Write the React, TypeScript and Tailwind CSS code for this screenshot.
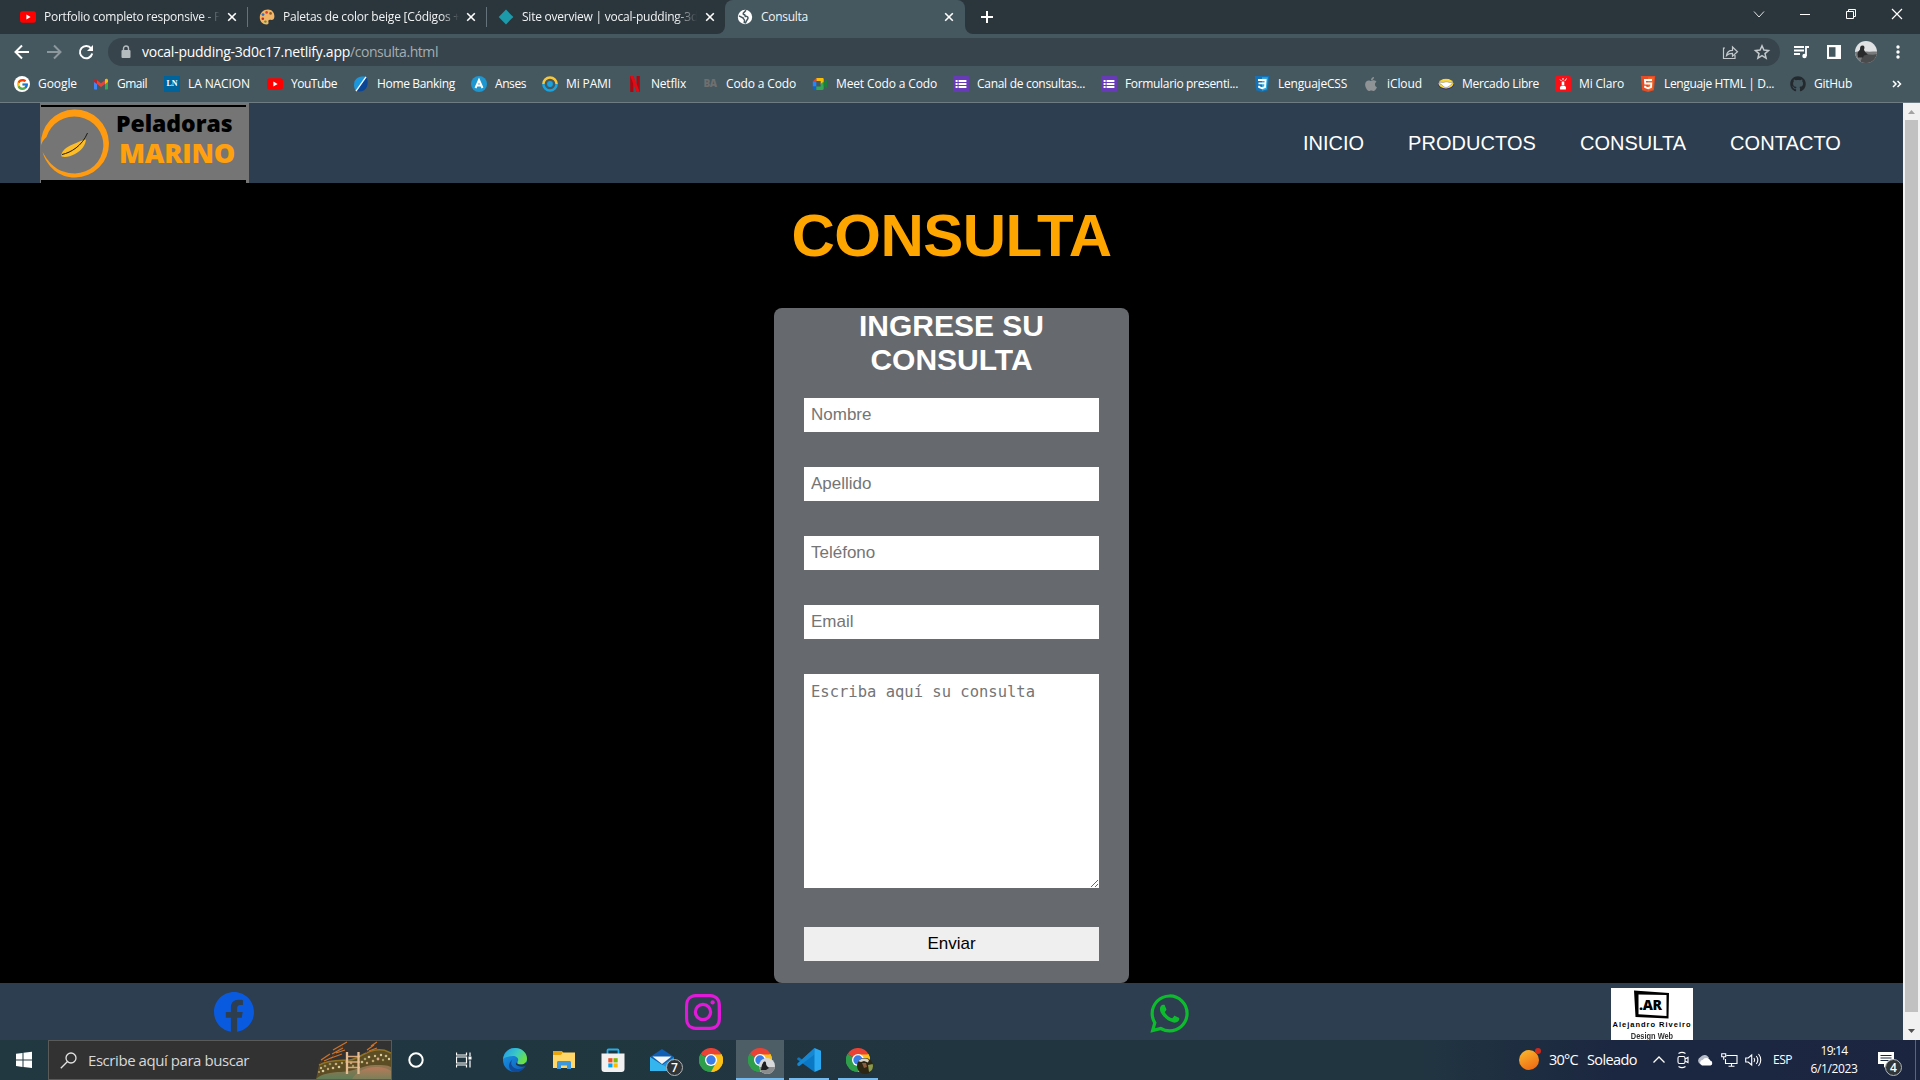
import { useLayoutEffect, useRef } from "react";
import type { ReactNode } from "react";
import { FcGoogle } from "react-icons/fc";
import { FaApple, FaGithub } from "react-icons/fa";
import { BiLogoFacebookCircle, BiLogoInstagram, BiLogoWhatsapp } from "react-icons/bi";

/* Single-line label whose letter spacing is tuned so that it fills `w` pixels. */
function Fit({ w, className = "", children }: { w: number; className?: string; children: string }) {
  const ref = useRef<HTMLSpanElement>(null);
  useLayoutEffect(() => {
    const el = ref.current;
    if (!el) return;
    el.style.letterSpacing = "0px";
    const natural = el.getBoundingClientRect().width;
    el.style.letterSpacing = `${(w - natural) / children.length}px`;
  }, [w, children]);
  return (
    <span ref={ref} className={`shrink-0 whitespace-pre ${className}`}>
      {children}
    </span>
  );
}

/* ---------- small icons ---------- */

const YouTube = () => (
  <svg width="16" height="16" viewBox="0 0 16 16">
    <rect x="0" y="2.3" width="16" height="11.4" rx="2.6" fill="#f00" />
    <path d="M6.4 5.6v4.8L10.6 8z" fill="#fff" />
  </svg>
);
const Palette = () => (
  <svg width="16" height="16" viewBox="0 0 16 16">
    <path d="M9 .6C4.5.6.8 4 .8 8.600c0 4 3 6.900 6.700 6.900 2 0 2.300-1.300 1.900-2.700-.4-1.500.6-2.300 2.100-2 2 .4 3.900-.3 3.900-3.300C15.400 3.400 12.800.6 9 .6z" fill="#f2b668" />
    <circle cx="4" cy="5.600" r="1.400" fill="#2e6fd0" />
    <circle cx="7.600" cy="3.400" r="1.300" fill="#e23b3b" />
    <circle cx="11.600" cy="4.400" r="1.300" fill="#8a5a2c" />
    <circle cx="3.800" cy="9.800" r="1.300" fill="#c02a20" />
    <circle cx="6.400" cy="12.600" r="1.200" fill="#3e9b46" />
  </svg>
);
const Diamond = () => (
  <svg width="16" height="16" viewBox="0 0 16 16">
    <path d="M8 .6 15.300 8 8 15.400.7 8z" fill="#1d9aaa" />
  </svg>
);
const Globe = () => (
  <svg width="16" height="16" viewBox="0 0 16 16">
    <circle cx="8" cy="8" r="7.200" fill="#fff" />
    <path d="M9 1.200 6.300 4.200c-.3 1.300.4 1.700 1.400 1.600l.6 1.600c1.500-.2 2.700.1 2.700 1.600 0 1.300-1 1.400-1.300 2.600L8.500 13.800l-1.200-.4.2-2.200c-.2-1-1.300-1-1.300-2.200L2 6.800" fill="none" stroke="#455860" strokeWidth="1.500" />
  </svg>
);
const Gmail = () => (
  <svg width="16" height="16" viewBox="0 0 16 16">
    <path d="M1 4v8.500c0 .6.4 1 1 1h2V7z" fill="#4285f4" />
    <path d="M15 4v8.500c0 .6-.4 1-1 1h-2V7z" fill="#34a853" />
    <path d="M4 4.200v3.900l4 3 4-3V4.200l-4 3z" fill="#ea4335" />
    <path d="M1 4.300C1 2.600 2.700 2.200 4 3.200v4.900L1 5.900z" fill="#c5221f" />
    <path d="M15 4.300c0-1.700-1.700-2.100-3-1.100v4.900l3-2.200z" fill="#fbbc04" />
  </svg>
);
const LaNacion = () => (
  <span className="flex h-4 w-4 items-center justify-center bg-[#00649c] font-['Liberation_Serif',serif] text-[8px] font-bold text-white">LN</span>
);
const HomeBanking = () => (
  <svg width="16" height="16" viewBox="0 0 16 16">
    <path d="M13 1C8.500-.5 3 1.500 1.500 5.500.8 9 .8 12.500 3 15z" fill="#1a97dc" />
    <path d="M13 1c2 2.500 2 6.500 1 9.500C12.500 14.500 8 16.500 3 15z" fill="#0b4595" />
    <path d="M13 .8 3 15.200" stroke="#fff" strokeWidth="1.300" />
  </svg>
);
const Anses = () => (
  <svg width="16" height="16" viewBox="0 0 16 16">
    <circle cx="8" cy="8" r="8" fill="#1e96cf" />
    <path d="M4.500 12 8 4l3.500 8M6 9.500h4" fill="none" stroke="#fff" strokeWidth="2" />
  </svg>
);
const Pami = () => (
  <svg width="16" height="16" viewBox="0 0 16 16">
    <path d="M1.400 8a6.600 6.600 0 0 1 13.200 0" fill="none" stroke="#f7c83d" strokeWidth="2.500" />
    <path d="M1.400 8a6.600 6.600 0 0 0 13.200 0" fill="none" stroke="#19a4df" strokeWidth="2.500" />
    <circle cx="8" cy="8" r="2.900" fill="#19a4df" />
  </svg>
);
const Netflix = () => (
  <svg width="16" height="16" viewBox="0 0 16 16">
    <path d="M3.200 0h3.200v16H3.200zM9.600 0h3.200v16H9.600z" fill="#b1060f" />
    <path d="M3.200 0h3.300l6.300 16H9.500z" fill="#e50914" />
  </svg>
);
const BuenosAires = () => (
  <span className="flex h-4 w-4 items-center justify-center font-['Open_Sans',sans-serif] text-[10px] font-extrabold tracking-tighter text-[#6f6f6e]">BA</span>
);
const Meet = () => (
  <svg width="16" height="16" viewBox="0 0 16 16">
    <path d="M4.300 2h6.200c.7 0 1.200.5 1.200 1.200v3L8.700 8.500V5H4.300z" fill="#fbbc04" />
    <path d="M4.300 2v3.600H.8z" fill="#ea4335" />
    <path d="M.8 5.400h3.500v5.200H.8z" fill="#2684fc" />
    <path d="M.8 10.500h3.500V14H1.900c-.6 0-1.100-.5-1.100-1.100z" fill="#0066da" />
    <path d="M4.300 14v-3.500h4.400V8l3-2.500v7.300c0 .7-.5 1.200-1.200 1.200z" fill="#34a853" />
    <path d="m11.700 6.300 2.500-2.200c.4-.4 1-.1 1 .4v7c0 .6-.6.800-1 .4l-2.500-2.100z" fill="#188038" />
  </svg>
);
const Forms = () => (
  <svg width="16" height="16" viewBox="0 0 16 16">
    <rect width="16" height="16" rx="1" fill="#673ab7" />
    <path d="M2.600 4h2v2h-2zM5.600 4h7.800v2H5.600zM2.600 7h2v2h-2zM5.600 7h7.800v2H5.600zM2.600 10h2v2h-2zM5.600 10h7.800v2H5.600z" fill="#fff" />
  </svg>
);
const Css3 = () => (
  <svg width="16" height="16" viewBox="0 0 16 16">
    <path d="M.8 0h14.400l-1.300 14.200L8 16l-5.900-1.800z" fill="#1572b6" />
    <path d="M8 1.200h5.900l-1.100 12.100L8 14.800z" fill="#33a9dc" />
    <path d="M4 4h7.600l-.6 7.200-3 1-2.900-1-.1-1.400M4.500 7.400h6.700" fill="none" stroke="#fff" strokeWidth="1.800" />
  </svg>
);
const Html5 = () => (
  <svg width="16" height="16" viewBox="0 0 16 16">
    <path d="M.8 0h14.400l-1.300 14.200L8 16l-5.900-1.800z" fill="#e44d26" />
    <path d="M8 1.200h5.900l-1.100 12.100L8 14.800z" fill="#f16529" />
    <path d="M12 4H4.900l.3 3.500h6.100l-.3 3.700-3 1-2.900-1-.1-1.400" fill="none" stroke="#fff" strokeWidth="1.800" />
  </svg>
);
const MercadoLibre = () => (
  <svg width="16" height="16" viewBox="0 0 16 16">
    <ellipse cx="8" cy="8" rx="8" ry="5.400" fill="#2d3277" />
    <ellipse cx="8" cy="7.600" rx="7.500" ry="4.800" fill="#fcd733" />
    <path d="M1.600 6.200c2-.2 3.200.6 4.800 0 1.300-.5 2.800-.6 4 0 1.400.6 2.700.2 4 0l-.5 2c-2 .3-2 2.400-4.200 2.900-1.400.5-3.300.4-4.300-.7C4.600 9.400 3.500 8.200 2 8z" fill="#fff" stroke="#6b7297" strokeWidth=".5" />
  </svg>
);
const Claro = () => (
  <svg width="16" height="16" viewBox="0 0 16 16">
    <rect width="16" height="16" rx="2" fill="#fb0f17" />
    <path d="M5.200 13.600c-1-3 .8-4 2.800-4s3.800 1 2.800 4zM6.700 9V5.500h2.600V9z" fill="#fff" />
    <path d="M5 3.500 6.500 5M8 2v2.200M11.500 2.500 9.800 5" stroke="#fff" strokeWidth="1" />
  </svg>
);
const Close = () => (
  <svg width="10" height="10" viewBox="0 0 10 10" className="shrink-0" stroke="#fff" strokeWidth="1.600">
    <path d="m1.200 1.200 7.600 7.600M8.800 1.200 1.200 8.800" />
  </svg>
);

/* ---------- browser chrome ---------- */

function Tab({ icon, title, w }: { icon: ReactNode; title: string; w: number }) {
  return (
    <div className="flex h-[34px] w-[239px] shrink-0 items-center">
      <div className="ml-[11px] h-4 w-4 shrink-0">{icon}</div>
      <div className="ml-2 w-[176px] shrink-0 overflow-hidden [mask-image:linear-gradient(90deg,#000_90%,transparent)]">
        <Fit w={w}>{title}</Fit>
      </div>
      <div className="ml-[7px] flex">
        <Close />
      </div>
      <div className="ml-auto h-5 w-px bg-[#65727a]" />
    </div>
  );
}

function TabStrip() {
  return (
    <div className="flex h-[34px] bg-[#2b363c] pl-[9px] text-xs text-[#f1f3f4]">
      <Tab icon={<YouTube />} title="Portfolio completo responsive - P" w={177} />
      <Tab icon={<Palette />} title="Paletas de color beige [Códigos +" w={177} />
      <div className="flex h-[34px] w-[230px] shrink-0 items-center">
        <div className="ml-[11px] h-4 w-4 shrink-0"><Diamond /></div>
        <div className="ml-2 w-[175px] shrink-0 overflow-hidden [mask-image:linear-gradient(90deg,#000_88%,transparent)]">
          <Fit w={176}>Site overview | vocal-pudding-3d</Fit>
        </div>
        <div className="ml-2 flex"><Close /></div>
      </div>
      <div className="flex h-[34px] w-2 items-end bg-[#455860]"><div className="h-full w-2 rounded-br-lg bg-[#2b363c]" /></div>
      <div className="flex h-[34px] w-[240px] shrink-0 items-center rounded-t-lg bg-[#455860] pl-3">
        <Globe />
        <Fit w={47} className="ml-2">Consulta</Fit>
        <div className="ml-auto mr-[11px] flex"><Close /></div>
      </div>
      <div className="h-[34px] w-2 bg-[#455860]"><div className="h-full w-2 rounded-bl-lg bg-[#2b363c]" /></div>
      <svg width="14" height="34" viewBox="0 0 14 34" className="ml-[7px]" stroke="#fff" strokeWidth="2">
        <path d="M1 17h12M7 11v12" />
      </svg>
      <div className="ml-auto flex h-7 items-center">
        <svg width="46" height="28" viewBox="0 0 46 28" fill="none" stroke="#dfe3e5"><path d="m18 11.500 5 5.500 5-5.500" /></svg>
        <svg width="46" height="28" viewBox="0 0 46 28" fill="none" stroke="#fff"><path d="M18 14.500h10" /></svg>
        <svg width="46" height="28" viewBox="0 0 46 28" fill="none" stroke="#fff"><path d="M18.500 11.500h7v7h-7zM20.500 11.500v-2h7v7h-2" /></svg>
        <svg width="46" height="28" viewBox="0 0 46 28" fill="none" stroke="#fff" strokeWidth="1.200"><path d="m18 9 10 10M28 9 18 19" /></svg>
      </div>
    </div>
  );
}

function Toolbar() {
  return (
    <div className="flex h-9 items-center bg-[#455860] pl-1.5">
      <svg width="32" height="36" viewBox="0 0 32 36" fill="none" stroke="#fff" strokeWidth="2"><path d="M23 18H10M16 11.500 9.500 18l6.500 6.500" /></svg>
      <svg width="32" height="36" viewBox="0 0 32 36" fill="none" stroke="#8d989d" strokeWidth="2"><path d="M9 18h13M16 11.500l6.500 6.500-6.500 6.500" /></svg>
      <svg width="32" height="36" viewBox="0 0 32 36" fill="none" stroke="#fff" strokeWidth="2"><path d="M21.200 14.500a6.200 6.200 0 1 0 1 5" /><path d="M23 11v6h-6z" fill="#fff" stroke="none" /></svg>
      <div className="ml-1.5 flex h-7 w-[1672px] items-center rounded-full bg-[#37444b] text-sm">
        <svg width="10" height="14" viewBox="0 0 10 14" className="ml-[13px]"><rect x=".5" y="5" width="9" height="8" rx="1" fill="#b5bcc0" /><path d="M2.500 5V3.500a2.500 2.500 0 0 1 5 0V5" fill="none" stroke="#b5bcc0" strokeWidth="1.400" /></svg>
        <Fit w={208} className="ml-[11px] text-white">vocal-pudding-3d0c17.netlify.app</Fit>
        <Fit w={88} className="text-[#a5aeb2]">/consulta.html</Fit>
        <div className="ml-auto flex items-center">
          <svg width="32" height="28" viewBox="0 0 32 28" fill="none" stroke="#c3c9cc" strokeWidth="1.200"><path d="M11 10H9.500v10.500H21V17M12.500 17.500c.4-3.500 2.500-5.200 6-5.200V9l5 4.700-5 4.500v-2.900c-2.800 0-4.500.5-6 2.200z" /></svg>
          <svg width="32" height="28" viewBox="0 0 32 28" className="mr-0.5" fill="none" stroke="#c3c9cc" strokeWidth="1.500"><path d="m16 7.800 1.900 4.300 4.600.4-3.500 3.100 1.100 4.600-4.100-2.500-4.100 2.500 1.100-4.600-3.500-3.100 4.600-.4z" /></svg>
        </div>
      </div>
      <svg width="32" height="36" viewBox="0 0 32 36" className="ml-[5px]" fill="none" stroke="#fff" strokeWidth="1.800"><path d="M9 13h10M9 16.500h10M9 20h6" /><path d="M21 22v-9h3" /><circle cx="19.500" cy="22" r="2.200" fill="#fff" stroke="none" /></svg>
      <svg width="33" height="36" viewBox="0 0 33 36"><path d="M10 11h14v14H10z" fill="#fff" /><path d="M12 13.200h6.500v9.600H12z" fill="#455860" /></svg>
      <svg width="32" height="36" viewBox="0 0 32 36">
        <defs><clipPath id="avatar"><circle cx="16" cy="18" r="11" /></clipPath></defs>
        <g clipPath="url(#avatar)">
          <path d="M5 7h22v22H5z" fill="#dfe1e3" /><path d="M5 18c5-1 9 0 22-.5v12H5z" fill="#77797b" />
          <path d="M13 21c5-2 8 1 14-1v9H10z" fill="#4a4b4d" />
          <path d="M7.500 20c.5-3 1.500-3 2.500-4.500 0-2.500.5-4 2.500-4s2.500 1.800 1.500 4c.5 2 2 3.500 4 5l-4 1-1 2H8z" fill="#2a2b2d" />
        </g>
      </svg>
      <svg width="32" height="36" viewBox="0 0 32 36" fill="#fff"><circle cx="16" cy="13" r="1.700" /><circle cx="16" cy="18" r="1.700" /><circle cx="16" cy="23" r="1.700" /></svg>
    </div>
  );
}

const bookmarks: { icon: ReactNode; label: string; text: number; cell: string }[] = [
  { icon: <span className="flex h-4 w-4 items-center justify-center rounded-full bg-white"><FcGoogle size={13} /></span>, label: "Google", text: 39, cell: "w-[79px]" },
  { icon: <Gmail />, label: "Gmail", text: 30, cell: "w-[71px]" },
  { icon: <LaNacion />, label: "LA NACION", text: 62, cell: "w-[103px]" },
  { icon: <YouTube />, label: "YouTube", text: 46, cell: "w-[86px]" },
  { icon: <HomeBanking />, label: "Home Banking", text: 78, cell: "w-[118px]" },
  { icon: <Anses />, label: "Anses", text: 31, cell: "w-[71px]" },
  { icon: <Pami />, label: "Mi PAMI", text: 45, cell: "w-[85px]" },
  { icon: <Netflix />, label: "Netflix", text: 35, cell: "w-[75px]" },
  { icon: <BuenosAires />, label: "Codo a Codo", text: 70, cell: "w-[110px]" },
  { icon: <Meet />, label: "Meet Codo a Codo", text: 101, cell: "w-[141px]" },
  { icon: <Forms />, label: "Canal de consultas...", text: 108, cell: "w-[148px]" },
  { icon: <Forms />, label: "Formulario presenti...", text: 113, cell: "w-[153px]" },
  { icon: <Css3 />, label: "LenguajeCSS", text: 69, cell: "w-[109px]" },
  { icon: <FaApple size={16} color="#8f9395" />, label: "iCloud", text: 35, cell: "w-[75px]" },
  { icon: <MercadoLibre />, label: "Mercado Libre", text: 77, cell: "w-[117px]" },
  { icon: <Claro />, label: "Mi Claro", text: 45, cell: "w-[85px]" },
  { icon: <Html5 />, label: "Lenguaje HTML | D...", text: 110, cell: "w-[150px]" },
  { icon: <FaGithub size={16} color="#24292e" />, label: "GitHub", text: 38, cell: "w-[102px]" },
];

function Bookmarks() {
  return (
    <div className="flex h-[33px] items-center border-b border-[#6d7b82] bg-[#455860] pb-[5px] pl-3.5 pt-px text-xs text-white">
      {bookmarks.map((b) => (
        <div key={b.label} className={`flex shrink-0 items-center gap-2 ${b.cell}`}>
          <span className="h-4 w-4 shrink-0">{b.icon}</span>
          <Fit w={b.text}>{b.label}</Fit>
        </div>
      ))}
      <svg width="10" height="8" viewBox="0 0 10 8" fill="none" stroke="#fff" strokeWidth="1.500"><path d="m1 1 3 3-3 3M5.500 1l3 3-3 3" /></svg>
    </div>
  );
}

/* ---------- web page ---------- */

function BrandLogo() {
  return (
    <div className="ml-10 flex h-20 w-[209px] flex-col bg-[#757575]">
      <div className="ml-px mt-[1.500px] h-[2.500px] w-[205px] shrink-0 bg-black" />
      <div className="flex h-[72px] shrink-0 items-start">
        <svg width="72" height="74" viewBox="0 0 72 74">
          <path d="M1 38A34 34 0 1 1 35 70.500C19 70.500 7 60 2.500 45c7 12 15 21 32.500 21.500A29 28.500 0 1 0 6.500 30C3.500 33 2 35 1 38z" fill="#ff9b10" />
          <path d="M21.500 49.500c-1-5 5-9.500 11-12 5-2 9-4.500 13.500-5C45.500 38 42 43.500 35 47c-5 2.600-9.500 3.500-13.500 2.500z" fill="#fcbd28" />
          <path d="M22 47.500c9-2 20-8.500 25.500-21.500" fill="none" stroke="#1c1a10" strokeWidth="1" />
        </svg>
        <div className="flex flex-col font-['Open_Sans',sans-serif] font-extrabold">
          <Fit w={120} className="ml-1 mt-[3px] text-[23px] leading-[27px] text-black">Peladoras</Fit>
          <Fit w={116} className="ml-[7px] mt-px text-[27px] leading-[30px] text-[#ffa00f]">MARINO</Fit>
        </div>
      </div>
      <div className="ml-px mt-px h-[2.500px] w-[205px] shrink-0 bg-black" />
    </div>
  );
}

function ArLogo() {
  return (
    <div className="flex h-[52px] w-[82px] flex-col items-center bg-white">
      <svg width="36" height="29" viewBox="0 0 36 29" className="mt-[1.500px] shrink-0">
        <path fillRule="evenodd" d="M0 .5 35 3l-.5 25.500L1.500 27zM4.500 4.500v19.800L32.500 26V5z" fill="#000" />
        <text x="5" y="20" fontFamily="Open Sans, sans-serif" fontWeight="800" fontSize="14" textLength="23">.AR</text>
      </svg>
      <Fit w={79} className="mt-px font-['Liberation_Sans',sans-serif] text-[7.5px] font-bold leading-[9px] text-black">Alejandro Riveiro</Fit>
      <span className="mt-0.5 flex w-[38px] origin-center scale-x-[0.78] justify-center whitespace-pre font-['Liberation_Sans',sans-serif] text-[9.500px] font-bold leading-[9px] text-[#333]">Design Web</span>
    </div>
  );
}

function WebPage() {
  return (
    <div className="flex h-[937px]">
      <div className="flex w-[1903px] flex-col bg-black font-['Liberation_Sans',Arial,sans-serif]">
        <header className="flex h-20 items-start justify-between bg-[#2c3e50]">
          <BrandLogo />
          <nav className="mr-[62px] flex h-[79px] items-center gap-11 text-[20px] text-white">
            <Fit w={61}>INICIO</Fit>
            <Fit w={128}>PRODUCTOS</Fit>
            <Fit w={106}>CONSULTA</Fit>
            <Fit w={111}>CONTACTO</Fit>
          </nav>
        </header>
        <main className="flex h-[800px] flex-col items-center">
          <h1 className="mt-[18px] h-[107px] text-[60px] font-bold leading-[69px] text-[orange]">
            <Fit w={320}>CONSULTA</Fit>
          </h1>
          <form className="flex h-[675px] w-[355px] flex-col items-center rounded-lg bg-[#66696e]">
            <h2 className="mt-px w-[200px] text-center text-[30px] font-bold leading-[34px] text-white">INGRESE SU CONSULTA</h2>
            <div className="mt-[21px] flex w-[295px] flex-col gap-[35px] text-[17px]">
              {["Nombre", "Apellido", "Teléfono", "Email"].map((p) => (
                <input key={p} placeholder={p} className="h-[34px] w-full bg-white px-[7px] placeholder:text-[#757575]" />
              ))}
            </div>
            <textarea
              placeholder="Escriba aquí su consulta"
              className="mt-[35px] h-[214px] w-[295px] shrink-0 resize bg-white px-[7px] py-2 font-['DejaVu_Sans_Mono',monospace] text-[15.5px] leading-5 placeholder:text-[#757575]"
            />
            <button type="button" className="mt-[39px] h-[34px] w-[295px] shrink-0 bg-[#efefef] text-[17px] text-black">Enviar</button>
          </form>
        </main>
        <footer className="flex h-[57px] items-end bg-[#2c3e50]">
          <BiLogoFacebookCircle size={48} color="#0a5ae0" className="mb-1 ml-[210px]" />
          <BiLogoInstagram size={48} color="#e01ad8" className="mb-1 ml-[421px]" />
          <BiLogoWhatsapp size={51} color="#0cbc2c" className="mb-[1px] ml-[417px]" />
          <div className="ml-[416px]"><ArLogo /></div>
        </footer>
      </div>
      <div className="flex w-[17px] flex-col items-center bg-[#f1f1f1]">
        <svg width="17" height="17" viewBox="0 0 17 17"><path d="M5 11h7L8.500 7z" fill="#a3a3a3" /></svg>
        <div className="h-[892px] w-[13px] bg-[#c1c1c1]" />
        <svg width="17" height="17" viewBox="0 0 17 17" className="mt-auto"><path d="M5 6h7l-3.500 4z" fill="#505050" /></svg>
      </div>
    </div>
  );
}

/* ---------- taskbar ---------- */

const Chrome = () => (
  <svg width="24" height="24" viewBox="0 0 24 24">
    <path d="M12 12 1.600 6A12 12 0 0 1 22.400 6z" fill="#ea4335" />
    <path d="M12 12 22.400 6A12 12 0 0 1 12 24z" fill="#fbc116" />
    <path d="M12 12 12 24A12 12 0 0 1 1.600 6z" fill="#34a04c" />
    <path d="M12 6.500h10.650A12 12 0 0 1 12 24l4.800-9z" fill="#fbc116" />
    <path d="M1.600 6 7.200 15l4.800 2.500 4.500-2L12 24A12 12 0 0 1 1.600 6z" fill="#2f9e4b" />
    <circle cx="12" cy="12" r="6" fill="#fff" />
    <circle cx="12" cy="12" r="4.700" fill="#3b7de8" />
  </svg>
);
const Edge = () => (
  <svg width="24" height="24" viewBox="0 0 24 24">
    <defs>
      <linearGradient id="edgeTop" x1="0" y1="0" x2="1" y2=".5"><stop offset=".1" stopColor="#249ee8" /><stop offset=".6" stopColor="#3bcbc0" /><stop offset="1" stopColor="#6be045" /></linearGradient>
      <linearGradient id="edgeLow" x1="0" y1="0" x2="1" y2="1"><stop stopColor="#1a9be6" /><stop offset="1" stopColor="#0d58b8" /></linearGradient>
    </defs>
    <circle cx="12" cy="12" r="12" fill="url(#edgeLow)" />
    <path d="M0 11C1 4.500 6 0 12 0c7 0 12 5 12 10.500 0 4-3 6-6.500 6-3 0-4-1-3-2.500 2-3-.5-6-4.500-6C6 8 2 9 0 11z" fill="url(#edgeTop)" />
    <path d="M9.500 11.500C6 16 10 21 16 21c2.500 0 4.500-1 6.500-3-2 4-6 6-10.500 6-6 0-8.500-8-2.500-12.500z" fill="#104a98" />
    <path d="M14.500 14c-.8 1.300-.3 2.500 3 2.500 2.500 0 4.500-.8 5.700-2.600L24 16l-1.700 2.300C18 19.500 14 18 13 16.500c-.3-1 .5-2 1.500-2.500z" fill="#213740" />
  </svg>
);
const Explorer = () => (
  <svg width="24" height="24" viewBox="0 0 24 24">
    <path d="M1 3h9l1.500 2H1z" fill="#e39b00" /><path d="M1 4.500h22V20H1z" fill="#ffd769" /><path d="M1 3h9v3L8.500 7H1z" fill="#e8a40c" />
    <path d="M5 21v-6.500c0-1 .6-1.500 1.500-1.500h11c.9 0 1.500.5 1.500 1.500V21h-4v-3.500H9V21z" fill="#3d97dd" />
  </svg>
);
const Store = () => (
  <svg width="24" height="24" viewBox="0 0 24 24">
    <path d="M6.500 7V2.500c0-.6.400-1 1-1h9c.6 0 1 .4 1 1V7" fill="none" stroke="#27aee9" strokeWidth="1.800" />
    <path d="M.5 5.500h23V21a3 3 0 0 1-3 3h-17a3 3 0 0 1-3-3z" fill="#f1f1f1" />
    <path d="M7.300 10.200h4.200v4.200H7.300z" fill="#f25022" /><path d="M12.500 10.200h4.200v4.200h-4.200z" fill="#7fba00" /><path d="M7.300 15.400h4.200v4H7.300z" fill="#00a4ef" /><path d="M12.500 15.400h4.200v4h-4.200z" fill="#ffb900" />
  </svg>
);
const Mail = () => (
  <svg width="24" height="24" viewBox="0 0 24 24">
    <path d="M0 9 12 1l12 8-12 8z" fill="#0f5fb4" /><path d="M2.500 8.500h19L12 16z" fill="#f5f5f5" /><path d="M0 9v14h24V9l-12 8z" fill="#1e95e0" /><path d="M0 23h24L10 15.500 0 9z" fill="#34b5ee" />
  </svg>
);
const VsCode = () => (
  <svg width="24" height="24" viewBox="0 0 24 24">
    <path d="M17.500 0 5 11.500 2 9.200.3 10l-.1 1.500L17.500 24l1-6V6z" fill="#0a78c4" />
    <path d="M17.500 6.500 2 18.200l-1.700-1v-1.700L17.500 0z" fill="#1687d2" />
    <path d="M17.500 0 24 2.800v18.400L17.500 24z" fill="#2aa9f2" />
  </svg>
);

function Badge({ children }: { children: string }) {
  return (
    <span className="flex h-[17px] w-[17px] items-center justify-center rounded-full border border-[#b0b5b8] bg-[#2f3538] text-xs font-semibold leading-none text-white">
      {children}
    </span>
  );
}

function Profile({ dark }: { dark?: boolean }) {
  return (
    <svg width="16" height="16" viewBox="0 0 16 16">
      <defs><clipPath id={dark ? "profileDark" : "profileLight"}><circle cx="8" cy="8" r="8" /></clipPath></defs>
      {dark ? (
        <g clipPath="url(#profileDark)">
          <path d="M0 0h16v16H0z" fill="#2c2613" />
          <path d="M1 3c3-3 8-3 11-1l-1 2.500-4-1.500-3 1z" fill="#d8d3c4" />
          <path d="M5 5h4l1 4-3 1z" fill="#8a5b3c" /><path d="M11 7l5-1v6l-4 2z" fill="#8a9a4c" />
        </g>
      ) : (
        <g clipPath="url(#profileLight)">
          <path d="M0 0h16v16H0z" fill="#d7d9da" /><path d="M0 9h16v7H0z" fill="#8a8c8e" />
          <path d="M2 12c.5-3 .5-5 2-7 .5-2 3-2 3 0 0 2 1 3.500 3 5l-3 2z" fill="#1e1f20" />
        </g>
      )}
    </svg>
  );
}

function Slot({ children, overlay, active, running }: { children: ReactNode; overlay?: ReactNode; active?: boolean; running?: boolean }) {
  return (
    <div className={`relative flex h-10 w-12 shrink-0 items-center justify-center ${active ? "bg-[#4d5e66]" : ""}`}>
      {children}
      {overlay && <div className="absolute left-[23px] top-[18px]">{overlay}</div>}
      {active && <div className="absolute inset-x-0 bottom-0 h-0.5 bg-[#76b9ed]" />}
      {running && <div className="absolute inset-x-1 bottom-0 h-0.5 bg-[#76b9ed]" />}
    </div>
  );
}

const stones: [number, number, number, string][] = [
  [5, 27, 1.2, "#c9b983"], [9, 25, 1.3, "#a89a5f"], [7, 30, 1.3, "#d8cda0"], [12, 28, 1.2, "#c2a873"], [14, 23, 1.3, "#98925c"],
  [17, 27, 1.3, "#d5c08e"], [3, 31, 1.1, "#b09a68"], [20, 23, 1.3, "#c8ad76"], [23, 26, 1.3, "#d8cda0"], [26, 22, 1.2, "#b9a569"],
  [35, 22, 1.3, "#b9a569"], [37, 25, 1.2, "#a89a5f"], [46, 21, 1.3, "#c6bc86"], [49, 18, 1.3, "#a9a368"], [51, 22, 1.2, "#c7a172"],
  [53, 16, 1.3, "#d8c79a"], [57, 20, 1.3, "#b9a569"], [59, 15, 1.2, "#cfc191"], [62, 18, 1.4, "#d7a98c"], [65, 14, 1.2, "#ddd0a2"],
  [67, 19, 1.2, "#a09a61"], [70, 15, 1.3, "#c6bc86"], [73, 18, 1.2, "#d8cda0"],
];

const SearchArt = () => (
  <svg width="75" height="38" viewBox="0 0 75 38">
    <defs>
      <linearGradient id="meadow" x1="0" y1="0" x2="0" y2="1"><stop stopColor="#9a7350" /><stop offset="1" stopColor="#5f7d55" /></linearGradient>
      <linearGradient id="hill" x1="0" y1="0" x2="0" y2="1"><stop stopColor="#b87a5a" /><stop offset="1" stopColor="#7a8058" /></linearGradient>
    </defs>
    <path d="M0 38 3 24C15 18 26 20 34 19S50 10 60 9s12 2 15 3v26z" fill="#5d4d24" />
    <path d="M3 24C15 18 26 20 34 19S50 10 60 9s12 2 15 3" fill="none" stroke="#8f7428" strokeWidth="1.500" />
    {stones.map(([x, y, r, c]) => <circle key={`${x}-${y}`} cx={x} cy={y} r={r} fill={c} />)}
    <path d="M0 38c5-5 15-7 25-7 16-1 22-7 34-7 7 0 12 0 16 2v12z" fill="url(#meadow)" />
    <path d="M36 38c5-8 14-12 24-12 7 0 12 2 15 4v8z" fill="url(#hill)" />
    <path d="M4 23c2-4 4-7 8-9M14 20c3-6 7-11 13-15M50 12c3-5 6-7 9-9" fill="none" stroke="#6b3a1c" strokeWidth=".9" />
    <path d="m5 19 9-6M8 20l9-4M16 13l11-6M17 9l14-8M15 17l11-4M20 12l9-3M51 9l7-5M53 10l8-3M55 5l6-4" fill="none" stroke="#c9722c" strokeWidth="1.300" />
    <path d="M30 15.500h14M29.500 21h14.500M30 26.500h14" fill="none" stroke="#d6a77a" strokeWidth="1.300" />
    <path d="M31 11v22M42.500 11v22" fill="none" stroke="#e6bd92" strokeWidth="2.300" />
  </svg>
);

function Taskbar() {
  return (
    <div className="flex h-10 items-center bg-[linear-gradient(90deg,#213841_0%,#20353f_50%,#213541_74%,#1b2740_84%,#1b2540_100%)] text-white">
      <svg width="48" height="40" viewBox="0 0 48 40" className="shrink-0" fill="#fff"><path d="M16 13.800 22.500 13V19.500H16zM23.500 12.800 32 11.800v7.700h-8.500zM16 20.500h6.500v6.400L16 26.100zM23.500 20.500H32V28l-8.500-1z" /></svg>
      <div className="flex h-10 w-[344px] shrink-0 items-center border border-[#5a5a58] bg-[#323232]">
        <svg width="17" height="17" viewBox="0 0 17 17" className="ml-[11px]" fill="none" stroke="#e2e2e2" strokeWidth="1.300"><circle cx="11" cy="6" r="5" /><path d="M7.500 9.500.8 16.200" /></svg>
        <Fit w={161} className="ml-[11px] text-[15px] text-[#d8d8d8]">Escribe aquí para buscar</Fit>
        <div className="ml-auto"><SearchArt /></div>
      </div>
      <Slot><svg width="16" height="16" viewBox="0 0 16 16"><circle cx="8" cy="8" r="6.700" fill="none" stroke="#fff" strokeWidth="2" /></svg></Slot>
      <div className="mr-[3px]">
        <Slot><svg width="16" height="16" viewBox="0 0 16 16" fill="none" stroke="#fff"><path d="M.5.500v2.500h10V.500M.500 15.500V13h10v2.500M.500 5h10v6H.500zM14 .500V4M14 8.500v7" strokeWidth="1.200" /><path d="M12.500 4.500h3v3h-3z" fill="#fff" stroke="none" /></svg></Slot>
      </div>
      <div className="flex gap-px">
        <Slot><Edge /></Slot>
        <Slot><Explorer /></Slot>
        <Slot><Store /></Slot>
        <Slot overlay={<div className="ml-[5px] mt-px"><Badge>7</Badge></div>}><Mail /></Slot>
        <Slot><Chrome /></Slot>
        <Slot active overlay={<Profile />}><Chrome /></Slot>
        <Slot running><VsCode /></Slot>
        <Slot running overlay={<Profile dark />}><Chrome /></Slot>
      </div>
      <div className="ml-auto flex items-center">
        <svg width="24" height="24" viewBox="0 0 24 24">
          <defs><linearGradient id="sun" x1=".2" y1="0" x2=".7" y2="1"><stop stopColor="#f8b62c" /><stop offset="1" stopColor="#f06a14" /></linearGradient></defs>
          <circle cx="10" cy="12" r="10" fill="url(#sun)" /><circle cx="19" cy="3" r="3" fill="#cc2a1d" />
        </svg>
        <Fit w={29} className="ml-1.5 text-[14.500px]">30°C</Fit>
        <Fit w={50} className="ml-[9px] text-[14.500px]">Soleado</Fit>
        <svg width="14" height="16" viewBox="0 0 14 16" className="ml-[15px]" fill="none" stroke="#fff" strokeWidth="1.300"><path d="m1.500 10.500 5.500-5.500 5.500 5.500" /></svg>
        <svg width="14" height="18" viewBox="0 0 14 18" className="ml-2.5" fill="none" stroke="#fff" strokeWidth="1.100"><rect x="2" y="5.500" width="7" height="7" rx="1.500" /><path d="m9 8 3-1.500v5L9 10M2.500 2.500c2-1.300 5-1.300 7 0M2.500 15.500c2 1.300 5 1.300 7 0" /></svg>
        <svg width="17" height="16" viewBox="0 0 17 16" className="ml-[7px]"><path d="M4 12.500a4 4 0 0 1-.5-7.500 5 5 0 0 1 8.500 1z" fill="#b6bcc8" /><path d="M5 13.500a3 3 0 0 1 1-5.800 4.200 4.200 0 0 1 7.200.8 2.600 2.600 0 0 1 .3 5z" fill="#fff" /></svg>
        <svg width="17" height="16" viewBox="0 0 17 16" className="ml-[7px]" fill="none" stroke="#fff" strokeWidth="1.100"><path d="M5.500 3.500H16v8H4.500V7M10.500 11.500V14M7.500 14.300h6M.7 1.700h4v3h-4zM2.700 4.700v3" /></svg>
        <svg width="17" height="16" viewBox="0 0 17 16" className="ml-[7px]" fill="none" stroke="#fff" strokeWidth="1.100"><path d="M.7 6v4h2.500l3.500 3V3L3.200 6zM9 6c.8 1.200.8 2.800 0 4M11.300 4c1.800 2.300 1.800 5.700 0 8M13.500 2c3 3.500 3 8.500 0 12" /></svg>
        <Fit w={19} className="ml-[11px] text-xs">ESP</Fit>
        <div className="ml-[18px] flex w-[48px] flex-col items-center gap-0.5 text-xs leading-4">
          <Fit w={27}>19:14</Fit>
          <Fit w={47}>6/1/2023</Fit>
        </div>
        <div className="relative ml-5 h-10 w-6">
          <svg width="17" height="17" viewBox="0 0 17 17" className="mt-3"><path d="M0 0h16v12h-7l-3 4v-4H0z" fill="#fff" /><path d="M2.500 3.500h11M2.500 6h11M2.500 8.500h8" stroke="#1b2640" strokeWidth="1.100" /></svg>
          <div className="absolute left-[7px] top-[19px]"><Badge>4</Badge></div>
        </div>
        <div className="ml-[13px] mr-1 h-10 w-px bg-[#5b657a]" />
      </div>
    </div>
  );
}

export default function App() {
  return (
    <div className="flex h-[1080px] w-[1920px] flex-col overflow-hidden font-['Open_Sans','Noto_Sans',sans-serif]">
      <TabStrip />
      <Toolbar />
      <Bookmarks />
      <WebPage />
      <Taskbar />
    </div>
  );
}
